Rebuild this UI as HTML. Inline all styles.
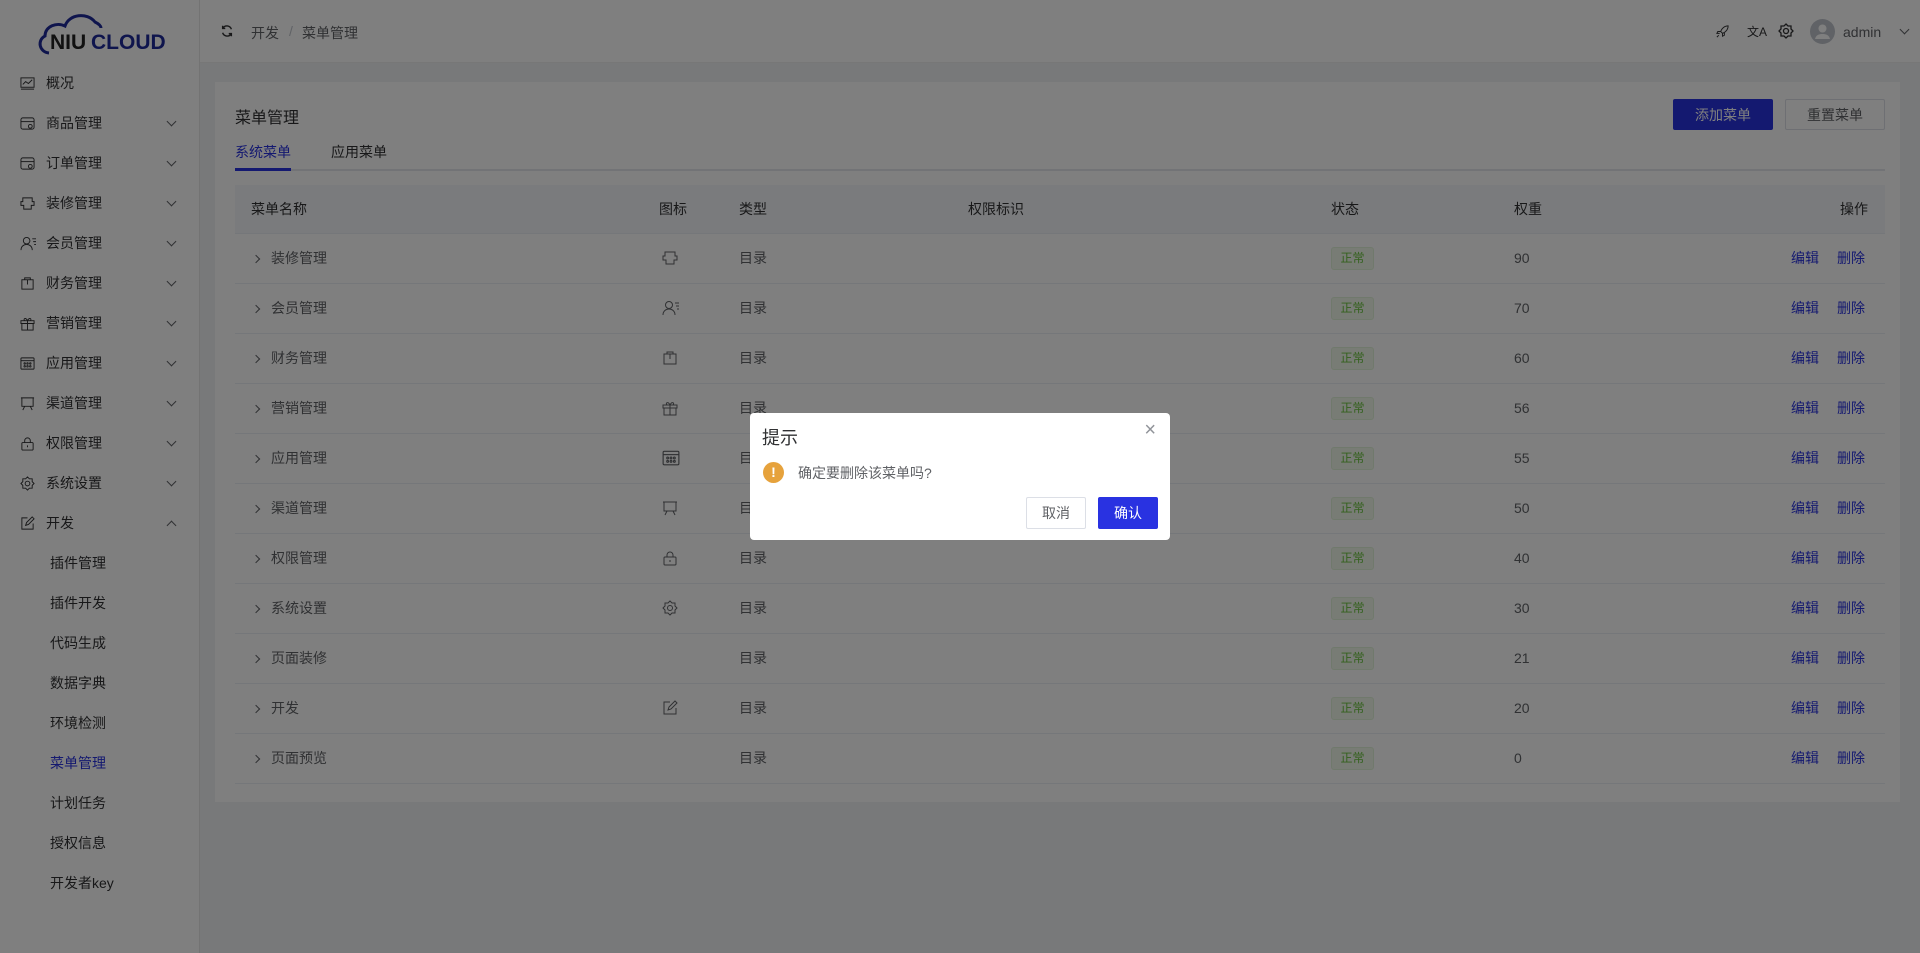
<!DOCTYPE html>
<html><head><meta charset="utf-8"><style>
*{box-sizing:border-box;margin:0;padding:0}
body{width:1920px;height:953px;overflow:hidden;font-family:"Liberation Sans","Noto Sans CJK SC",sans-serif;font-size:14px;color:#303133;background:#f0f2f5;position:relative}
.side{position:absolute;left:0;top:0;width:200px;height:953px;background:#fff;border-right:1px solid #e6e6e6}
.logo{height:63px;display:flex;align-items:center;justify-content:center}
.mi{position:absolute;left:0;width:200px;height:40px;display:flex;align-items:center;font-size:14px;color:#303133}
.mi svg{position:absolute;left:20px}
.mi .t{position:absolute;left:46px}
.mi .ar{position:absolute;left:168px;width:7px;height:7px;border-right:1px solid #606266;border-bottom:1px solid #606266;transform:rotate(45deg);top:15px}
.mi .ar.up{transform:rotate(-135deg);top:19px}
.sub .t{left:50px}
.hdr{position:absolute;left:200px;top:0;right:0;height:63px;background:#fff;border-bottom:1px solid #eee}
.card{position:absolute;left:215px;top:82px;width:1685px;height:720px;background:#fff}
.btn{position:absolute;height:31px;display:flex;align-items:center;justify-content:center;font-size:14px;border-radius:2px}
table{position:absolute;left:20px;top:103px;width:1650px;border-collapse:collapse}
th{background:#f5f7fa;height:48px;text-align:left;font-weight:normal;color:#303133;border-bottom:1px solid #ebeef5}
td{height:50px;border-bottom:1px solid #ebeef5;color:#606266}
td svg{display:block;margin-left:3px}
.nm{padding-left:18px}
.nm i{display:inline-block;width:6px;height:6px;border-right:1px solid #606266;border-bottom:1px solid #606266;transform:rotate(-45deg);margin-right:12px;position:relative;top:-1px}
.tag{display:inline-block;width:43px;height:23px;line-height:21px;text-align:center;font-size:12px;color:#67c23a;background:#f0f9eb;border:1px solid #e1f3d8;border-radius:3px}
.op{color:#2932e1;margin-left:18px}
.ov{position:absolute;left:0;top:0;width:1920px;height:953px;background:rgba(0,0,0,.5)}
.dlg{position:absolute;left:750px;top:413px;width:420px;height:127px;background:#fff;border-radius:4px}
</style></head><body>
<div class="side">
 <div class="logo"><svg width="130" height="48" viewBox="0 0 130 48"><path d="M14 45 C4 44 2 32 10 28 C10 18 22 14 30 18 C34 6 52 4 60 14 C64 16 66 18 66 20" fill="none" stroke="#1e2a9a" stroke-width="3"/><text x="15" y="41" font-family="Liberation Sans" font-weight="bold" font-size="21" fill="#222">NIU</text><text x="56" y="41" font-family="Liberation Sans" font-weight="bold" font-size="21" fill="#1e2a9a">CLOUD</text></svg></div>
 <div class="mi" style="top:63px"><svg width="15" height="15" viewBox="0 0 16 16" fill="none" stroke="#303133"><rect x="1" y="2" width="14" height="10"/><path d="M3 9l3-3 3 2 4-4M1 14h14"/></svg><span class="t">概况</span></div>
 <div class="mi" style="top:103px"><svg width="15" height="15" viewBox="0 0 16 16" fill="none" stroke="#303133"><rect x="1" y="2" width="14" height="12" rx="2"/><path d="M1 6h14"/><circle cx="11" cy="11" r="2"/></svg><span class="t">商品管理</span><i class="ar"></i></div>
 <div class="mi" style="top:143px"><svg width="15" height="15" viewBox="0 0 16 16" fill="none" stroke="#303133"><rect x="1" y="2" width="14" height="12" rx="2"/><path d="M1 6h14"/><circle cx="11" cy="11" r="2"/></svg><span class="t">订单管理</span><i class="ar"></i></div>
 <div class="mi" style="top:183px"><svg width="15" height="15" viewBox="0 0 16 16" fill="none" stroke="#303133"><path d="M3 2h10v4h2v4h-3v4H4v-4H1V6h2z"/></svg><span class="t">装修管理</span><i class="ar"></i></div>
 <div class="mi" style="top:223px"><svg width="17" height="15" viewBox="0 0 18 16" fill="none" stroke="#303133"><circle cx="7" cy="5" r="3.5"/><path d="M1 15c0-4 3-6 6-6s6 2 6 6M13 3h4M14 6h3M15 9h2"/></svg><span class="t">会员管理</span><i class="ar"></i></div>
 <div class="mi" style="top:263px"><svg width="15" height="15" viewBox="0 0 16 16" fill="none" stroke="#303133"><rect x="2" y="4" width="12" height="10"/><path d="M5 4V2h6v2M8 4v5"/></svg><span class="t">财务管理</span><i class="ar"></i></div>
 <div class="mi" style="top:303px"><svg width="15" height="15" viewBox="0 0 16 16" fill="none" stroke="#303133"><rect x="1" y="5" width="14" height="3"/><rect x="2" y="8" width="12" height="7"/><path d="M8 5v10M8 5C6 1 3 3 5 5M8 5c2-4 5-2 3 0"/></svg><span class="t">营销管理</span><i class="ar"></i></div>
 <div class="mi" style="top:343px"><svg width="15" height="15" viewBox="0 0 16 16" fill="none" stroke="#303133"><rect x="1" y="2" width="14" height="12" rx="1"/><path d="M1 5h14"/><circle cx="5" cy="8" r=".8"/><circle cx="8" cy="8" r=".8"/><circle cx="11" cy="8" r=".8"/><circle cx="5" cy="11" r=".8"/><circle cx="8" cy="11" r=".8"/><circle cx="11" cy="11" r=".8"/></svg><span class="t">应用管理</span><i class="ar"></i></div>
 <div class="mi" style="top:383px"><svg width="15" height="15" viewBox="0 0 16 16" fill="none" stroke="#303133"><path d="M1 2h14M2 2v9h12V2M5 11l-2 4M11 11l2 4"/></svg><span class="t">渠道管理</span><i class="ar"></i></div>
 <div class="mi" style="top:423px"><svg width="15" height="15" viewBox="0 0 16 16" fill="none" stroke="#303133"><rect x="2" y="7" width="12" height="8" rx="1"/><path d="M5 7V5a3 3 0 016 0v2M8 10v2"/></svg><span class="t">权限管理</span><i class="ar"></i></div>
 <div class="mi" style="top:463px"><svg width="15" height="15" viewBox="0 0 16 16" fill="none" stroke="#303133"><circle cx="8" cy="8" r="2.5"/><path d="M8 1l2 2 3 0 0 3 2 2-2 2 0 3-3 0-2 2-2-2-3 0 0-3-2-2 2-2 0-3 3 0z"/></svg><span class="t">系统设置</span><i class="ar"></i></div>
 <div class="mi" style="top:503px"><svg width="15" height="15" viewBox="0 0 16 16" fill="none" stroke="#303133"><path d="M8 2H2v12h12V8M6 10l1-3 6-6 2 2-6 6z"/></svg><span class="t">开发</span><i class="ar up"></i></div>
 <div class="mi sub" style="top:543px"><span class="t">插件管理</span></div>
 <div class="mi sub" style="top:583px"><span class="t">插件开发</span></div>
 <div class="mi sub" style="top:623px"><span class="t">代码生成</span></div>
 <div class="mi sub" style="top:663px"><span class="t">数据字典</span></div>
 <div class="mi sub" style="top:703px"><span class="t">环境检测</span></div>
 <div class="mi sub" style="top:743px;color:#2932e1"><span class="t">菜单管理</span></div>
 <div class="mi sub" style="top:783px"><span class="t">计划任务</span></div>
 <div class="mi sub" style="top:823px"><span class="t">授权信息</span></div>
 <div class="mi sub" style="top:863px"><span class="t">开发者key</span></div>
</div>
<div class="hdr">
 <svg style="position:absolute;left:20px;top:24px" width="14" height="14" viewBox="0 0 16 16" fill="none" stroke="#303133" stroke-width="1.6"><path d="M13 6A5.5 5.5 0 003 5M3 10a5.5 5.5 0 0010 1M3 2v3h3M13 14v-3h-3"/></svg>
 <span style="position:absolute;left:51px;top:23px;color:#606266">开发</span><span style="position:absolute;left:89px;top:23px;color:#c0c4cc">/</span><span style="position:absolute;left:102px;top:23px;color:#606266">菜单管理</span>
 <svg style="position:absolute;left:1515px;top:24px" width="15" height="15" viewBox="0 0 16 16" fill="none" stroke="#303133"><path d="M14 2c-4 0-7 3-8 6l2 2c3-1 6-4 6-8zM6 8L3 8 2 10h3M8 10v3l2-1v-3M4 12l-2 2"/></svg>
 <span style="position:absolute;left:1547px;top:23px;font-size:12px;color:#303133">文A</span>
 <svg style="position:absolute;left:1578px;top:23px" width="16" height="16" viewBox="0 0 16 16" fill="none" stroke="#303133" stroke-width="1.3"><circle cx="8" cy="8" r="2.5"/><path d="M8 1l2 2 3 0 0 3 2 2-2 2 0 3-3 0-2 2-2-2-3 0 0-3-2-2 2-2 0-3 3 0z"/></svg>
 <svg style="position:absolute;left:1610px;top:19px" width="25" height="25" viewBox="0 0 25 25"><circle cx="12.5" cy="12.5" r="12.5" fill="#c0c4cc"/><circle cx="12.5" cy="9.5" r="4" fill="#fff"/><path d="M5 20c1-4 4-5 7.5-5s6.5 1 7.5 5z" fill="#fff"/></svg>
 <span style="position:absolute;left:1643px;top:24px;color:#606266">admin</span>
 <i style="position:absolute;left:1701px;top:26px;width:7px;height:7px;border-right:1px solid #606266;border-bottom:1px solid #606266;transform:rotate(45deg)"></i>
</div>
<div class="card">
 <div style="position:absolute;left:20px;top:22px;font-size:16px">菜单管理</div>
 <div class="btn" style="left:1458px;top:17px;width:100px;background:#2932e1;color:#fff">添加菜单</div>
 <div class="btn" style="left:1570px;top:17px;width:100px;border:1px solid #dcdfe6;color:#606266">重置菜单</div>
 <div style="position:absolute;left:20px;top:60px;color:#2932e1">系统菜单</div>
 <div style="position:absolute;left:116px;top:60px">应用菜单</div>
 <div style="position:absolute;left:20px;top:87px;width:1650px;height:2px;background:#e4e7ed"></div>
 <div style="position:absolute;left:20px;top:86px;width:56px;height:3px;background:#2932e1"></div>
 <table>
 <tr><th style="padding-left:16px;width:424px">菜单名称</th><th style="width:80px">图标</th><th style="width:229px">类型</th><th style="width:363px">权限标识</th><th style="width:183px">状态</th><th>权重</th><th style="text-align:right;padding-right:17px">操作</th></tr>
 <tr><td class="nm"><i></i>装修管理</td><td><svg width="16" height="16" viewBox="0 0 16 16" fill="none" stroke="#606266"><path d="M3 2h10v4h2v4h-3v4H4v-4H1V6h2z"/></svg></td><td>目录</td><td></td><td><span class="tag">正常</span></td><td>90</td><td style="text-align:right;padding-right:20px"><span class="op">编辑</span><span class="op">删除</span></td></tr>
 <tr><td class="nm"><i></i>会员管理</td><td><svg width="18" height="16" viewBox="0 0 18 16" fill="none" stroke="#606266"><circle cx="7" cy="5" r="3.5"/><path d="M1 15c0-4 3-6 6-6s6 2 6 6M13 3h4M14 6h3M15 9h2"/></svg></td><td>目录</td><td></td><td><span class="tag">正常</span></td><td>70</td><td style="text-align:right;padding-right:20px"><span class="op">编辑</span><span class="op">删除</span></td></tr>
 <tr><td class="nm"><i></i>财务管理</td><td><svg width="16" height="16" viewBox="0 0 16 16" fill="none" stroke="#606266"><rect x="2" y="4" width="12" height="10"/><path d="M5 4V2h6v2M8 4v5"/></svg></td><td>目录</td><td></td><td><span class="tag">正常</span></td><td>60</td><td style="text-align:right;padding-right:20px"><span class="op">编辑</span><span class="op">删除</span></td></tr>
 <tr><td class="nm"><i></i>营销管理</td><td><svg width="16" height="16" viewBox="0 0 16 16" fill="none" stroke="#606266"><rect x="1" y="5" width="14" height="3"/><rect x="2" y="8" width="12" height="7"/><path d="M8 5v10M8 5C6 1 3 3 5 5M8 5c2-4 5-2 3 0"/></svg></td><td>目录</td><td></td><td><span class="tag">正常</span></td><td>56</td><td style="text-align:right;padding-right:20px"><span class="op">编辑</span><span class="op">删除</span></td></tr>
 <tr><td class="nm"><i></i>应用管理</td><td><svg width="18" height="18" viewBox="0 0 16 16" fill="none" stroke="#606266"><rect x="1" y="2" width="14" height="12" rx="1"/><path d="M1 5h14"/><circle cx="5" cy="8" r=".8"/><circle cx="8" cy="8" r=".8"/><circle cx="11" cy="8" r=".8"/><circle cx="5" cy="11" r=".8"/><circle cx="8" cy="11" r=".8"/><circle cx="11" cy="11" r=".8"/></svg></td><td>目录</td><td></td><td><span class="tag">正常</span></td><td>55</td><td style="text-align:right;padding-right:20px"><span class="op">编辑</span><span class="op">删除</span></td></tr>
 <tr><td class="nm"><i></i>渠道管理</td><td><svg width="16" height="16" viewBox="0 0 16 16" fill="none" stroke="#606266"><path d="M1 2h14M2 2v9h12V2M5 11l-2 4M11 11l2 4"/></svg></td><td>目录</td><td></td><td><span class="tag">正常</span></td><td>50</td><td style="text-align:right;padding-right:20px"><span class="op">编辑</span><span class="op">删除</span></td></tr>
 <tr><td class="nm"><i></i>权限管理</td><td><svg width="16" height="16" viewBox="0 0 16 16" fill="none" stroke="#606266"><rect x="2" y="7" width="12" height="8" rx="1"/><path d="M5 7V5a3 3 0 016 0v2M8 10v2"/></svg></td><td>目录</td><td></td><td><span class="tag">正常</span></td><td>40</td><td style="text-align:right;padding-right:20px"><span class="op">编辑</span><span class="op">删除</span></td></tr>
 <tr><td class="nm"><i></i>系统设置</td><td><svg width="16" height="16" viewBox="0 0 16 16" fill="none" stroke="#606266"><circle cx="8" cy="8" r="2.5"/><path d="M8 1l2 2 3 0 0 3 2 2-2 2 0 3-3 0-2 2-2-2-3 0 0-3-2-2 2-2 0-3 3 0z"/></svg></td><td>目录</td><td></td><td><span class="tag">正常</span></td><td>30</td><td style="text-align:right;padding-right:20px"><span class="op">编辑</span><span class="op">删除</span></td></tr>
 <tr><td class="nm"><i></i>页面装修</td><td></td><td>目录</td><td></td><td><span class="tag">正常</span></td><td>21</td><td style="text-align:right;padding-right:20px"><span class="op">编辑</span><span class="op">删除</span></td></tr>
 <tr><td class="nm"><i></i>开发</td><td><svg width="16" height="16" viewBox="0 0 16 16" fill="none" stroke="#606266"><path d="M8 2H2v12h12V8M6 10l1-3 6-6 2 2-6 6z"/></svg></td><td>目录</td><td></td><td><span class="tag">正常</span></td><td>20</td><td style="text-align:right;padding-right:20px"><span class="op">编辑</span><span class="op">删除</span></td></tr>
 <tr><td class="nm"><i></i>页面预览</td><td></td><td>目录</td><td></td><td><span class="tag">正常</span></td><td>0</td><td style="text-align:right;padding-right:20px"><span class="op">编辑</span><span class="op">删除</span></td></tr>
 </table>
</div>
<div class="ov"></div>
<div class="dlg">
 <div style="position:absolute;left:12px;top:11px;font-size:18px;color:#303133">提示</div>
 <div style="position:absolute;right:14px;top:6px;font-size:20px;color:#909399;font-weight:300">×</div>
 <div style="position:absolute;left:13px;top:49px;width:21px;height:21px;border-radius:50%;background:#e6a23c;color:#fff;font-weight:bold;font-size:14px;text-align:center;line-height:21px">!</div>
 <div style="position:absolute;left:48px;top:50px;color:#606266;font-size:14px">确定要删除该菜单吗?</div>
 <div class="btn" style="left:276px;top:84px;width:60px;height:32px;border:1px solid #dcdfe6;color:#606266">取消</div>
 <div class="btn" style="left:348px;top:84px;width:60px;height:32px;background:#2932e1;color:#fff">确认</div>
</div>
</body></html>
